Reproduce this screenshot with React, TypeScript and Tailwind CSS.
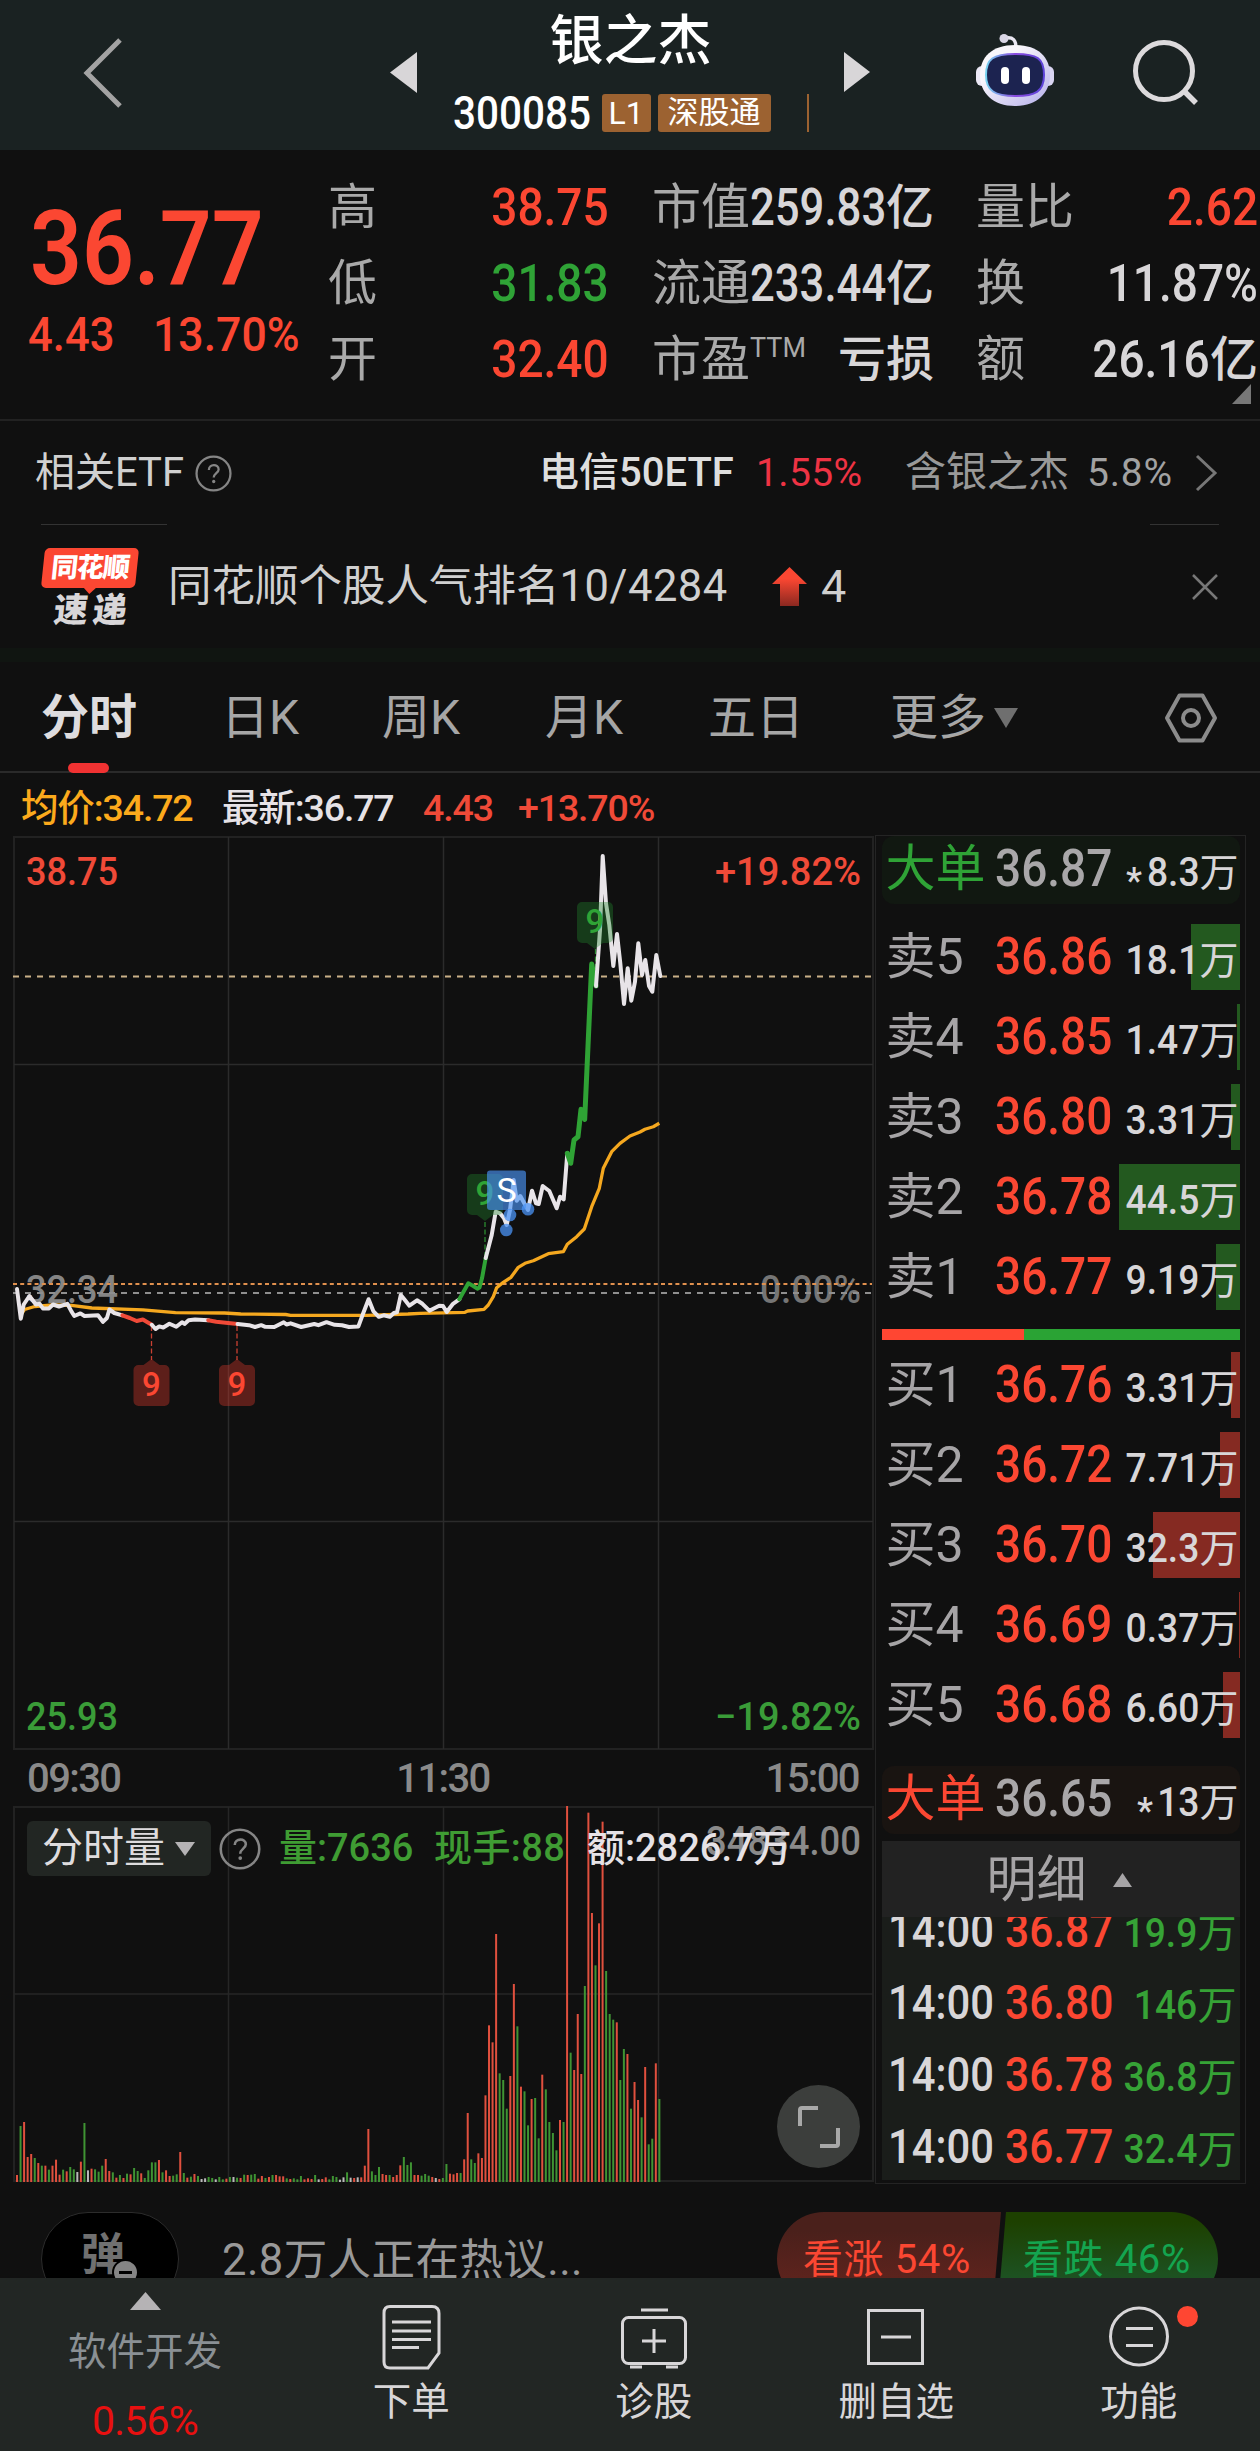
import React from "react";
import { clsx } from "clsx";

type Tone = "up" | "down" | "flat";

interface BookLevel {
  label: string;
  price: string;
  volume: string;
  bar: number;
}

const sellLevels: BookLevel[] = [
  { label: "卖5", price: "36.86", volume: "18.1", bar: 49 },
  { label: "卖4", price: "36.85", volume: "1.47", bar: 3 },
  { label: "卖3", price: "36.80", volume: "3.31", bar: 9 },
  { label: "卖2", price: "36.78", volume: "44.5", bar: 121 },
  { label: "卖1", price: "36.77", volume: "9.19", bar: 24 },
];

const buyLevels: BookLevel[] = [
  { label: "买1", price: "36.76", volume: "3.31", bar: 9 },
  { label: "买2", price: "36.72", volume: "7.71", bar: 20 },
  { label: "买3", price: "36.70", volume: "32.3", bar: 87 },
  { label: "买4", price: "36.69", volume: "0.37", bar: 1 },
  { label: "买5", price: "36.68", volume: "6.60", bar: 17 },
];

const ticks = [
  { time: "14:00", price: "36.87", volume: "19.9" },
  { time: "14:00", price: "36.80", volume: "146" },
  { time: "14:00", price: "36.78", volume: "36.8" },
  { time: "14:00", price: "36.77", volume: "32.4" },
];

// One entry per minute: r = up, g = down, w = unchanged, followed by the height
const volumeData =
  "r21 g168 r180 r75 r84 g72 r57 g49 r49 g37 r49 r67 r22 g37 r32 g45 g38 w30 r61 g177 " +
  "w35 r40 g38 g31 g49 r69 r33 g29 r13 g21 r12 g25 r23 g42 g33 r26 g12 g35 g59 g59 " +
  "r66 g29 r35 r18 g19 g23 r90 g27 r13 g16 r24 g18 w9 w11 g15 g12 w8 g15 g8 r10 " +
  "g15 w15 g13 r12 g22 r21 g22 g24 r10 r18 g12 r15 g21 r21 r17 r17 g11 r9 g11 g8 " +
  "g18 r8 r11 r9 g21 w8 r9 r14 g8 g18 g15 w7 w14 g29 w13 r12 w14 r14 r49 r159 " +
  "g32 g21 g45 r24 r21 g21 r15 r21 r50 g75 g51 g59 r21 r21 g19 g24 g19 r15 w12 r9 " +
  "g12 g54 r25 r23 r27 g27 r68 r207 g68 g57 r86 r72 r260 r470 r419 r744 g326 g306 g220 r318 " +
  "r594 g467 r286 g272 g170 r249 g252 g131 r322 g278 g180 g147 g95 r186 g180 r1128 g388 r336 r504 r324 " +
  "g588 r1108 r807 g650 r776 r1081 g633 g504 g487 r479 g306 g399 r384 g220 r300 r246 g194 r345 g113 g130 " +
  "r356 g249";

const volumeBars = volumeData.split(" ").map((item) => ({
  tone: (item[0] === "r" ? "up" : item[0] === "g" ? "down" : "flat") as Tone,
  height: Number(item.slice(1)) / 3,
}));

const barColors: Record<Tone, string> = {
  up: "#e0503e",
  down: "#3f9433",
  flat: "#b9b9b9",
};

const priceLines = [
  {
    color: "#e8e4e8",
    points:
      "17,453 20.8,482.7 23.7,468.5 29.4,460 35.9,468.5 39.6,467.8 42.9,472.4 49,472.4 53,468.5 59,470.5 67.3,467.8 71.4,475.4 74.3,480 80.4,477.4 84.5,480 98,479.3 102.9,485.8 106.9,482 109.4,473.5 114.3,477 122.4,479.3",
  },
  { color: "#f04a38", points: "122.4,479.3 129.8,482 136.7,485 142.9,483.5 147,486 151.8,488.8" },
  {
    color: "#e8e4e8",
    points:
      "151.8,488.8 155.5,493 159.2,490.4 163.3,491.5 169.4,487.7 176.3,490.8 182,486.2 184.5,488 188.6,484.2 195,483.5 208.2,484.2",
  },
  { color: "#f04a38", points: "208.2,484.2 216.3,485.8 237.6,488" },
  {
    color: "#e8e4e8",
    points:
      "237.6,488 249,489.2 255,491 261.2,489.2 265.3,490.8 274.3,491 283.7,486.2 286.5,488.5 290.6,487.3 301.2,491 314.3,488 318.4,489.2 326.5,486.2 334.7,488.8 342,489.2 349,491 358.4,490.4 363.3,477 368.6,463.2 373.5,475.4 378.8,480.8 383.7,479.3 389.8,480.8 393.9,477 397,476.2 400.8,459 404.9,464 409.4,469.7 417,464.3 422.4,467.8 429.4,474.7 439.2,469.7 443,470 446.7,476 453,467.8 459.3,463.3",
  },
  { color: "#2fa335", points: "459.3,463.3 468.3,447.3 473.3,450 477.3,452.7 479.5,451.5 482,442.3 485.7,422" },
  {
    color: "#e8e4e8",
    points:
      "485.7,422 491.7,399 495.7,375.7 500,377.3 504,382.3 506.7,389 510,374 513.7,344 516.7,364.7 520.3,360 524,366.7 528,374 532,354.7 536,367.3 538.7,368 542.7,350 549.3,355 556.7,372.3 560,360.7 563.7,363.3 567.3,317.3",
  },
  { color: "#2fa335", points: "567.3,317.3 570.7,327.3 574,304 578,300.7 581,273.3 584.7,283.3 591.7,128 596,150", wide: true },
  {
    color: "#e8e4e8",
    points:
      "596,150 600,94 602.7,20 606,67.3 609.3,89 613.3,130 617,98 620.3,127.3 624,168 627.7,132.3 631.3,164.7 635,145.7 638.3,107.3 642,139 645.3,124 649,150 652.3,155.7 656.3,119 660.3,140",
  },
];

const averageLine =
  "20,480 24.5,473.5 34.7,470.5 53,469 71.4,469.3 91.8,472 142.9,473.9 175.5,476.6 224.5,477 240.8,478 285.7,478.5 290.6,479.3 367.3,479.3 408,478 420,477.3 465,476.3 467.7,475 484,473.3 488.3,469 493.3,460.7 496.7,451.7 503.3,446.3 511,441.3 518.3,431.3 525,427.3 533.3,424.7 548.3,417.7 563.3,415.7 567.3,408.3 576.7,400.7 584.3,393 591.7,370.7 599.3,352.3 603.3,332.3 611.7,315.7 620,307.3 630,300 640,296 645,293.3 653.3,290.7 659.3,287.3";

function Header() {
  return (
    <header className="flex h-[150px] items-start bg-[#1a2222]">
      <svg className="mt-[36px] ml-[80px] h-[74px] w-[46px] shrink-0" viewBox="0 0 46 74" fill="none">
        <path d="M40 4 7 37l33 33" stroke="#a3a3a3" strokeWidth="5" />
      </svg>
      <svg className="mt-[52px] ml-[264px] h-[41px] w-[27px] shrink-0" viewBox="0 0 27 41">
        <path d="M27 0v41L0 20.500z" fill="#d8d6d8" />
      </svg>
      <div className="flex w-[427px] shrink-0 flex-col items-center">
        <h1 className="mt-[13px] text-[54px] leading-[58px] font-medium text-white">银之杰</h1>
        <div className="mt-[22px] flex h-[40px] items-center">
          <span className="w-[149px] origin-left scale-x-[0.88] text-[46px] font-medium text-white">300085</span>
          <span className="h-[38px] w-[49px] rounded-[3px] bg-[#9c6231] text-center text-[32px] leading-[38px] text-white">
            L1
          </span>
          <span className="ml-[7px] h-[38px] w-[113px] rounded-[3px] bg-[#9c6231] text-center text-[31px] leading-[37px] text-white">
            深股通
          </span>
          <span className="ml-[36px] h-[38px] w-[2px] bg-[#9c6231]" />
        </div>
      </div>
      <svg className="mt-[52px] h-[40px] w-[26px] shrink-0" viewBox="0 0 26 40">
        <path d="M0 0v40l26-20z" fill="#d8d6d8" />
      </svg>
      <svg className="mt-[32px] ml-[106px] h-[76px] w-[84px] shrink-0" viewBox="0 0 84 76" fill="none">
        <defs>
          <linearGradient id="shell" x1="0" y1="0" x2="1" y2="1">
            <stop offset="0.3" stopColor="#f8f6fb" />
            <stop offset="1" stopColor="#b4aeea" />
          </linearGradient>
          <linearGradient id="rim" x1="0" y1="0" x2="1" y2="0">
            <stop offset="0" stopColor="#76d2f0" />
            <stop offset="0.5" stopColor="#8a4be0" />
            <stop offset="1" stopColor="#5c43d8" />
          </linearGradient>
        </defs>
        <path d="M30 6c7-1 10 2 10 10" stroke="#e9e7f2" strokeWidth="3.500" />
        <circle cx="28" cy="6.500" r="4.500" fill="#d9d6e6" />
        <rect x="0" y="34" width="14" height="20" rx="6" fill="#ebe8f6" />
        <rect x="64" y="34" width="14" height="20" rx="6" fill="#d9d5f2" />
        <path d="M39 13c23 0 35 12 35 30S61 74 39 74 4 61 4 43s12-30 35-30z" fill="url(#shell)" />
        <path
          d="M39 22c22 0 29 4 29 21s-9 21-29 21-29-5-29-21 7-21 29-21z"
          fill="#1c2350"
          stroke="url(#rim)"
          strokeWidth="2"
        />
        <rect x="25" y="35" width="8" height="17" rx="4" fill="#fff" />
        <rect x="46" y="35" width="8" height="17" rx="4" fill="#fff" />
      </svg>
      <svg className="mt-[38px] ml-[71px] h-[68px] w-[70px] shrink-0" viewBox="0 0 70 68" fill="none">
        <circle cx="33" cy="33" r="28.500" stroke="#dcdadc" strokeWidth="5" />
        <path d="m52 52 13 13" stroke="#dcdadc" strokeWidth="5.500" />
      </svg>
    </header>
  );
}

interface StatProps {
  label: string;
  value: string;
  unit?: string;
  tone?: Tone;
  sup?: string;
  narrow?: boolean;
}

function Stat({ label, value, unit, tone = "flat", sup, narrow }: StatProps) {
  return (
    <div className="flex h-[76px] justify-between leading-[76px] whitespace-nowrap">
      <span className="text-[49px] text-[#a9a9a9]">
        {label}
        {sup && <sup className="top-[-0.7em] text-[27px] leading-none">{sup}</sup>}
      </span>
      <span
        className={clsx(
          "flex w-0 justify-end font-medium",
          tone === "up" && "text-[#fb4732]",
          tone === "down" && "text-[#2fa336]",
          tone === "flat" && "text-[#d8d6d8]",
        )}
      >
        <span className={clsx("origin-right text-[52px]", narrow ? "scale-x-[0.84]" : "scale-x-[0.885]")}>{value}</span>
        {unit && <span className="text-[48px]">{unit}</span>}
      </span>
    </div>
  );
}

function QuoteSummary() {
  return (
    <section className="relative flex h-[271px] border-b-2 border-[#222] pt-[20px]">
      <div className="w-[328px] shrink-0 whitespace-nowrap text-[#fb4732]">
        <div className="mt-[28px] ml-[30px] h-[102px] origin-left scale-x-[0.875] text-[104px] leading-[102px] font-semibold">
          36.77
        </div>
        <div className="mt-[9px] ml-[28px] flex text-[49px] leading-[52px] font-medium">
          <span className="w-[125px] origin-left scale-x-[0.89]">4.43</span>
          <span className="origin-left scale-x-[0.91]">13.70%</span>
        </div>
      </div>
      <div className="w-[281px] shrink-0">
        <Stat label="高" value="38.75" tone="up" />
        <Stat label="低" value="31.83" tone="down" />
        <Stat label="开" value="32.40" tone="up" />
      </div>
      <div className="ml-[43px] w-[282px] shrink-0">
        <Stat label="市值" value="259.83" unit="亿" narrow />
        <Stat label="流通" value="233.44" unit="亿" narrow />
        <Stat label="市盈" sup="TTM" value="" unit="亏损" />
      </div>
      <div className="ml-[42px] w-[282px] shrink-0">
        <Stat label="量比" value="2.62" tone="up" />
        <Stat label="换" value="11.87%" />
        <Stat label="额" value="26.16" unit="亿" />
      </div>
      <svg className="absolute right-[9px] bottom-[15px] h-[20px] w-[19px]" viewBox="0 0 19 20">
        <path d="M19 0v20H0z" fill="#777" />
      </svg>
    </section>
  );
}

function QuestionIcon({ className, size }: { className?: string; size: number }) {
  return (
    <svg className={className} width={size} height={size} viewBox="0 0 36 36" fill="none">
      <circle cx="18" cy="18" r="16.500" stroke="#858585" strokeWidth="2.200" />
      <path d="M13.500 14.500c0-6 9.500-6 9.500-.5 0 3.500-4.800 4-4.800 8" stroke="#858585" strokeWidth="2.200" />
      <circle cx="18.200" cy="25.800" r="1.600" fill="#858585" />
    </svg>
  );
}

function RelatedEtf() {
  return (
    <section>
      <div className="flex h-[103px] items-center pt-[1px] text-[39px] whitespace-nowrap text-[#d0d0d0]">
        <span className="ml-[35px] w-[160px] text-[40px]">相关ETF</span>
        <QuestionIcon size={37} />
        <span className="ml-[307px] w-[217px] text-[40px] font-medium text-[#dedede]">电信50ETF</span>
        <span className="w-[149px] tracking-[0.01em] text-[#ee3344]">1.55%</span>
        <span className="w-[182px] text-[41px] text-[#999]">含银之杰</span>
        <span className="w-[107px] tracking-[0.02em] text-[#a2a2a2]">5.8%</span>
        <svg className="h-[38px] w-[24px]" viewBox="0 0 24 38" fill="none">
          <path d="m3 2 18 17L3 36" stroke="#777" strokeWidth="3" />
        </svg>
      </div>
      <div className="flex justify-between pr-[41px] pl-[41px]">
        <div className="h-px w-[126px] bg-[#333]" />
        <div className="h-px w-[69px] bg-[#333]" />
      </div>
    </section>
  );
}

function NoticeBar() {
  return (
    <section className="flex h-[123px] items-center text-[43.500px] whitespace-nowrap text-[#d0d0d0]">
      <div className="ml-[41px] flex w-[98px] flex-col items-center">
        <div className="relative flex h-[40px] w-[94px] -skew-x-6 items-center justify-center rounded-[5px] bg-[#fb4732] text-[27px] leading-none font-black tracking-[-0.04em] text-white">
          同花顺
          <svg className="absolute bottom-[-6px] left-[42px] h-[7px] w-[14px]" viewBox="0 0 14 7">
            <path d="M0 0h14L7 7z" fill="#fb4732" />
          </svg>
        </div>
        <div className="mt-[6px] flex -skew-x-6 gap-[5px] text-[34px] leading-[32px] font-black text-[#d8d6d8]">
          <span>速</span>
          <span>递</span>
        </div>
      </div>
      <span className="ml-[29px] w-[602px]">
        同花顺个股人气排名<span className="tracking-[0.012em]">10/4284</span>
      </span>
      <svg className="ml-[2px] h-[39px] w-[35px]" viewBox="0 0 35 39">
        <defs>
          <linearGradient id="rise" x1="0" y1="0" x2="0" y2="1">
            <stop offset="0.3" stopColor="#fb4732" />
            <stop offset="1" stopColor="#8a2820" />
          </linearGradient>
        </defs>
        <path d="M17.500 0 35 17h-8v22H8V17H0z" fill="url(#rise)" />
      </svg>
      <span className="ml-[14px] text-[45px]">4</span>
      <svg className="mr-[41px] ml-auto h-[28px] w-[28px]" viewBox="0 0 28 28" fill="none">
        <path d="m2 2 24 24M26 2 2 26" stroke="#777" strokeWidth="2.500" />
      </svg>
    </section>
  );
}

function PeriodTabs() {
  return (
    <nav className="flex h-[111px] items-center border-b-2 border-[#2a2a2a] pt-[2px] text-[48px] whitespace-nowrap text-[#a6a6a6]">
      <div className="relative ml-[41px] w-[180px] text-[48px] font-bold text-[#dedcde]">
        分时
        <div className="absolute top-[81px] left-[27px] h-[10px] w-[41px] rounded-[5px] bg-[#f03232]" />
      </div>
      <span className="w-[161px]">日K</span>
      <span className="w-[163px]">周K</span>
      <span className="w-[163px]">月K</span>
      <span className="w-[182px]">五日</span>
      <span className="w-[104px]">更多</span>
      <svg className="h-[20px] w-[24px]" viewBox="0 0 24 20">
        <path d="M0 0h24L12 20z" fill="#6f6f6f" />
      </svg>
      <svg className="ml-[146px] h-[52px] w-[54px]" viewBox="0 0 54 52" fill="none">
        <path d="M15.500 3.500h23L51 26 38.500 48.500h-23L3 26z" stroke="#8c8c8c" strokeWidth="4" strokeLinejoin="round" />
        <circle cx="27" cy="26" r="8" stroke="#8c8c8c" strokeWidth="4" />
      </svg>
    </nav>
  );
}

function Legend() {
  return (
    <div className="flex h-[63px] items-center pt-[7px] pl-[21px] text-[37.500px] font-medium tracking-[-0.03em] whitespace-nowrap">
      <span className="w-[201px] text-[#fcaa1c]">均价:34.72</span>
      <span className="w-[201px] text-[#e6e2e6]">最新:36.77</span>
      <span className="w-[95px] text-[#f04a38]">4.43</span>
      <span className="text-[#f04a38]">+13.70%</span>
    </div>
  );
}

function NineMarker({ x, y, tone }: { x: number; y: number; tone: "up" | "down" }) {
  const isUp = tone === "up";
  return (
    <g transform={`translate(${x} ${y})`}>
      <g fill={isUp ? "#e63a2c" : "#22882b"} fillOpacity="0.36">
        <path
          d={
            isUp
              ? "M5 0h5l8-6 8 6h5a5 5 0 0 1 5 5v31a5 5 0 0 1-5 5H5a5 5 0 0 1-5-5V5a5 5 0 0 1 5-5z"
              : "M5 0h26a5 5 0 0 1 5 5v31a5 5 0 0 1-5 5h-5l-8 6-8-6H5a5 5 0 0 1-5-5V5a5 5 0 0 1 5-5z"
          }
        />
      </g>
      <text x="18" y="31" textAnchor="middle" fontSize="33" fontWeight="500" fill={isUp ? "#fb4732" : "#2fa336"}>
        9
      </text>
    </g>
  );
}

function PriceChart() {
  return (
    <svg className="block h-[914px] w-[876px]" viewBox="0 0 876 914" fill="none">
      <rect x="14" y="1" width="859" height="912" stroke="#222" strokeWidth="2" />
      <path d="M228.500 1v912M443.500 1v912M658.500 1v912M14 228.500h859M14 685.500h859" stroke="#2b2b2b" strokeWidth="1.500" />
      <g fontSize="39" fontWeight="500">
        <text x="26" y="49" textLength="92" lengthAdjust="spacingAndGlyphs" fill="#f04a38">38.75</text>
        <text x="715" y="49" textLength="146" lengthAdjust="spacingAndGlyphs" fill="#f04a38">+19.82%</text>
        <text x="26" y="894" textLength="92" lengthAdjust="spacingAndGlyphs" fill="#3a9c38">25.93</text>
        <text x="715" y="894" textLength="146" lengthAdjust="spacingAndGlyphs" fill="#3a9c38">−19.82%</text>
        <text x="26" y="467" textLength="92" lengthAdjust="spacingAndGlyphs" fill="#858585">32.34</text>
        <text x="760" y="467" textLength="101" lengthAdjust="spacingAndGlyphs" fill="#757575">0.00%</text>
      </g>
      <path d="M13 140.500h859" stroke="#c9b088" strokeWidth="2" strokeDasharray="6 6" />
      <path d="M13 448h859" stroke="#e0904e" strokeWidth="2" strokeDasharray="4 3.200" />
      <path d="M13 457h859" stroke="#8f8f8f" strokeWidth="2" strokeDasharray="6 6" />
      <path d="M151.500 490v34M237 490v34" stroke="#c94032" strokeWidth="1.300" strokeDasharray="5 2.500" />
      <path d="M485 386v36M595.500 113v20" stroke="#2a8c30" strokeWidth="1.300" strokeDasharray="5 2.500" />
      <polyline points={averageLine} stroke="#f5a81f" strokeWidth="3.300" strokeLinejoin="round" />
      {priceLines.map((line, idx) => (
        <polyline
          key={idx}
          points={line.points}
          stroke={line.color}
          strokeWidth={line.wide ? 5 : 4}
          strokeLinejoin="round"
          strokeLinecap="round"
        />
      ))}
      <NineMarker x={133.5} y={529} tone="up" />
      <NineMarker x={219} y={529} tone="up" />
      <NineMarker x={577} y={66} tone="down" />
      <NineMarker x={467} y={338} tone="down" />
      <g fill="#4a93f5" fillOpacity="0.75">
        <rect x="487" y="334.500" width="39" height="39.500" rx="3" fillOpacity="0.65" />
        <circle cx="510" cy="379" r="6.300" />
        <circle cx="528" cy="373.300" r="6.300" />
        <circle cx="506.300" cy="394" r="6.300" />
      </g>
      <text x="506.500" y="366" textAnchor="middle" fontSize="34" fill="#fff">S</text>
    </svg>
  );
}

function VolumeChart() {
  return (
    <div className="relative h-[377px] w-[876px]">
      <svg className="absolute inset-0 h-[377px] w-[876px]" viewBox="0 0 876 377" fill="none">
        <rect x="14" y="1" width="859" height="374" stroke="#222" strokeWidth="2" />
        <path d="M228.500 1v374M443.500 1v374M658.500 1v374M14 188h859" stroke="#262626" strokeWidth="1.500" />
        {volumeBars.map((bar, idx) => (
          <rect
            key={idx}
            x={16 + idx * 3.549}
            y={376 - bar.height}
            width="2"
            height={bar.height}
            fill={barColors[bar.tone]}
          />
        ))}
        <text x="706" y="49" fontSize="40" fontWeight="500" textLength="155" lengthAdjust="spacingAndGlyphs" fill="#8a8a8a">
          34834.00
        </text>
      </svg>
      <div className="relative flex items-center pt-[14px] pl-[27px] text-[38px] font-medium whitespace-nowrap">
        <div className="flex h-[55px] w-[184px] items-center rounded-[6px] bg-[#222623] pt-[1px] pl-[15px] text-[41px] font-normal text-[#dedcde]">
          分时量
          <svg className="ml-[10px] h-[14px] w-[20px]" viewBox="0 0 20 14">
            <path d="M0 0h20L10 14z" fill="#b5b3b5" />
          </svg>
        </div>
        <QuestionIcon className="ml-[8px]" size={42} />
        <span className="ml-[18px] w-[155px] text-[#3f9c33]">量:7636</span>
        <span className="w-[153px] tracking-[0.01em] text-[#3f9c33]">现手:88</span>
        <span className="text-[#e6e2e6]">额:2826.7万</span>
      </div>
      <div className="absolute top-[279px] left-[777px] flex h-[83px] w-[83px] items-center justify-center rounded-full bg-[#3c3e3c]">
        <svg className="h-[44px] w-[44px]" viewBox="0 0 44 44" fill="none">
          <path d="M3 21V5a2 2 0 0 1 2-2h16M41 23v16a2 2 0 0 1-2 2H23" stroke="#a8a8a8" strokeWidth="4" />
        </svg>
      </div>
    </div>
  );
}

function Volume({ value, big }: { value: string; big?: boolean }) {
  return (
    <span className="ml-auto flex w-0 items-baseline justify-end text-[40px]">
      {big && <span className="relative top-[7px] mr-[1px] text-[36px] font-medium">*</span>}
      <span className="origin-right scale-x-[0.93] font-medium">{value}</span>
      <span className="text-[39px]">万</span>
    </span>
  );
}

function BookRow({ level, side }: { level: BookLevel; side: "sell" | "buy" }) {
  return (
    <div className="relative h-[66px] w-[358px]">
      <div
        className={clsx("absolute top-0 right-0 h-[66px]", side === "sell" ? "bg-[#23591f]" : "bg-[#852a22]")}
        style={{ width: level.bar }}
      />
      <div className="relative flex items-baseline pr-[1px] pl-[4px] leading-[65px] whitespace-nowrap text-[#d8d6d8]">
        <span className="w-[109px] text-[50px] text-[#a6a4a6]">{level.label}</span>
        <span className="w-[116px] origin-left scale-x-[0.885] text-[52px] font-medium text-[#fb4732]">
          {level.price}
        </span>
        <Volume value={level.volume} />
      </div>
    </div>
  );
}

function BigOrder({ price, volume, tone }: { price: string; volume: string; tone: "up" | "down" }) {
  return (
    <div
      className={clsx(
        "flex h-[68px] w-[358px] items-baseline rounded-[12px] pr-[1px] pl-[4px] leading-[65px] whitespace-nowrap text-[#d8d6d8]",
        tone === "up" ? "bg-[#191411]" : "bg-[#111811]",
      )}
    >
      <span className={clsx("w-[109px] text-[50px]", tone === "up" ? "text-[#fb4732]" : "text-[#2fa336]")}>大单</span>
      <span className="w-[116px] origin-left scale-x-[0.885] text-[52px] font-medium text-[#a9a7a9]">{price}</span>
      <Volume value={volume} big />
    </div>
  );
}

function OrderBook() {
  return (
    <aside className="flex h-[1349px] w-[371px] flex-col items-center border border-[#242424]">
      <BigOrder price="36.87" volume="8.3" tone="down" />
      <div className="mt-[20px] flex flex-col gap-[14px]">
        {sellLevels.map((level) => (
          <BookRow key={level.label} level={level} side="sell" />
        ))}
      </div>
      <div className="mt-[19px] flex h-[11px] w-[358px]">
        <div className="w-[142px] bg-[#ff4632]" />
        <div className="flex-1 bg-[#2aa334]" />
      </div>
      <div className="mt-[12px] flex flex-col gap-[14px]">
        {buyLevels.map((level) => (
          <BookRow key={level.label} level={level} side="buy" />
        ))}
      </div>
      <div className="mt-[28px]">
        <BigOrder price="36.65" volume="13" tone="up" />
      </div>
      <div className="mt-[7px] flex h-[76px] w-[358px] shrink-0 items-center bg-[#222] pt-[2px] pl-[105px] text-[50px] text-[#a6a4a6]">
        明细
        <svg className="ml-[26px] h-[14px] w-[19px]" viewBox="0 0 19 14">
          <path d="M9.500 0 19 14H0z" fill="#a6a4a6" />
        </svg>
      </div>
      <div className="h-[263px] w-[358px] overflow-hidden bg-[#1a1d1a]">
        {ticks.map((tick, idx) => (
          <div
            key={idx}
            className="flex h-[72px] items-baseline pr-[3px] pl-[6px] leading-[72px] whitespace-nowrap text-[#36a336] first:-mt-[22px]"
          >
            <span className="w-[117px] origin-left scale-x-[0.87] text-[48px] font-medium text-[#d8d6d8]">{tick.time}</span>
            <span className="w-[110px] origin-left scale-x-[0.885] text-[48px] font-medium text-[#fb4732]">
              {tick.price}
            </span>
            <Volume value={tick.volume} />
          </div>
        ))}
      </div>
    </aside>
  );
}

function DiscussionBar() {
  return (
    <section className="flex h-[93px] items-start overflow-hidden pt-[27px] whitespace-nowrap">
      <div className="relative ml-[41px] h-[94px] w-[138px] shrink-0 rounded-[47px] border border-[#2c2c2c] bg-black pl-[39px] text-[44px] leading-[84px] font-bold text-[#707070]">
        弹
        <div className="absolute top-[46px] left-[70px] flex h-[27px] w-[27px] items-center justify-center rounded-full border-2 border-black bg-[#858585]">
          <div className="h-[3px] w-[13px] bg-black" />
        </div>
      </div>
      <span className="ml-[43px] w-[555px] shrink-0 text-[43.500px] leading-[97px] tracking-[0.01em] text-[#999]">
        2.8万人正在热议...
      </span>
      <div className="relative h-[94px] w-[441px] shrink-0 text-[40px] leading-[96px]">
        <svg className="absolute inset-0 h-[94px] w-[441px]" viewBox="0 0 441 94">
          <defs>
            <linearGradient id="bear" x1="0" y1="0" x2="0" y2="1">
              <stop offset="0.100" stopColor="#1d4000" />
              <stop offset="0.700" stopColor="#1d5222" />
            </linearGradient>
            <linearGradient id="bull" x1="0" y1="0" x2="0" y2="1">
              <stop offset="0.200" stopColor="#4a201b" />
              <stop offset="0.700" stopColor="#5c231d" />
            </linearGradient>
          </defs>
          <path d="M47 0h177l-8 94H47a47 47 0 0 1 0-94z" fill="url(#bull)" />
          <path d="M229 0h165a47 47 0 0 1 0 94H221z" fill="url(#bear)" />
        </svg>
        <div className="relative flex tracking-[0.015em]">
          <span className="ml-[26px] w-[220px] text-[#fb4732]">看涨 54%</span>
          <span className="text-[#14a550]">看跌 46%</span>
        </div>
      </div>
    </section>
  );
}

function NavItem({ label, children }: { label: string; children: React.ReactNode }) {
  return (
    <div className="flex w-[242.500px] flex-col items-center pt-[25px]">
      <svg
        className="h-[68px] w-[100px] overflow-visible"
        viewBox="0 0 100 68"
        fill="none"
        stroke="#d8d6d8"
        strokeWidth="3"
      >
        {children}
      </svg>
      <span className="mt-[9px] text-[38.500px] leading-[44px] text-[#d8d6d8]">{label}</span>
    </div>
  );
}

function BottomNav() {
  return (
    <footer className="flex h-[174px] bg-[#222624]">
      <div className="flex w-[290px] flex-col items-center pt-[14px]">
        <svg className="h-[18px] w-[31px]" viewBox="0 0 31 18">
          <path d="M15.500 0 31 18H0z" fill="#b5b3b5" />
        </svg>
        <span className="mt-[20px] text-[38.500px] leading-[44px] text-[#8a9094]">软件开发</span>
        <span className="mt-[24px] text-[41px] leading-[46px] tracking-[-0.02em] text-[#e81010]">0.56%</span>
      </div>
      <NavItem label="下单">
        <path d="M29 3.500h42q7 0 7 7V50L67 65H29q-6 0-6-6V10q0-6.500 6-6.500z" />
        <path d="M31 19h39M31 28h39M31 36.500h39M31 44.500h27" />
      </NavItem>
      <NavItem label="诊股">
        <rect x="18.500" y="14.500" width="63" height="46" rx="6" />
        <path d="M37 7h27M26 64h12M62 64h12M50 26v24M38 38h24" />
      </NavItem>
      <NavItem label="删自选">
        <path d="M22.500 7.500h54v53h-54zM35 34h30" />
      </NavItem>
      <NavItem label="功能">
        <circle cx="50" cy="33.500" r="28.500" />
        <path d="M37 25.500h27M37 42.500h27" />
        <circle cx="98.500" cy="13.500" r="10.500" fill="#ff4632" stroke="none" />
      </NavItem>
    </footer>
  );
}

export default function App() {
  return (
    <div className="h-[2451px] w-[1260px] overflow-hidden bg-[#101010] font-['Roboto','Noto_Sans_CJK_SC',sans-serif]">
      <Header />
      <QuoteSummary />
      <RelatedEtf />
      <NoticeBar />
      <div className="h-[14px] bg-[#101511]" />
      <PeriodTabs />
      <main className="flex h-[1412px]">
        <div className="w-[875px] shrink-0">
          <Legend />
          <PriceChart />
          <div className="flex h-[56px] w-[876px] items-center justify-between pt-[2px] pr-[17px] pl-[27px] text-[40px] font-medium tracking-[-0.04em] text-[#8a8a8a]">
            <span>09:30</span>
            <span>11:30</span>
            <span>15:00</span>
          </div>
          <VolumeChart />
        </div>
        <div className="pt-[62px]">
          <OrderBook />
        </div>
      </main>
      <DiscussionBar />
      <BottomNav />
    </div>
  );
}
